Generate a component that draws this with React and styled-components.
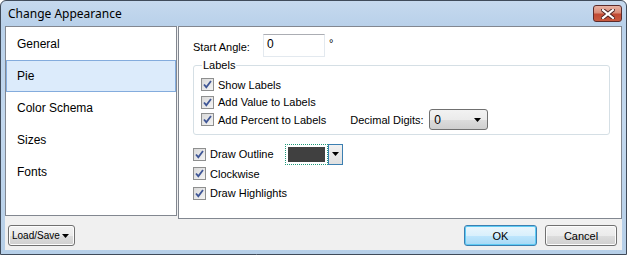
import React from 'react';
import styled, { createGlobalStyle } from 'styled-components';

const GlobalStyle = createGlobalStyle`
  html, body {
    margin: 0;
    padding: 0;
    background: #ffffff;
  }
  body {
    font-family: "Liberation Sans", Arial, sans-serif;
    font-size: 11px;
    color: #000;
  }
`;

const pages = ['General', 'Pie', 'Color Schema', 'Sizes', 'Fonts'];

const Check = () => (
  <svg width="11" height="11" viewBox="0 0 11 11">
    <path d="M2 5.5 L4.3 8.2 L9 2" fill="none" stroke="#3f5696" strokeWidth="1.8" />
  </svg>
);

const Arrow = () => (
  <svg width="7" height="4" viewBox="0 0 7 4">
    <path d="M0 0 H7 L3.5 4 Z" fill="#000" />
  </svg>
);

const CheckRow = ({ label, tall, children }) => (
  <Row tall={tall}>
    <Box>
      <Check />
    </Box>
    <span>{label}</span>
    {children}
  </Row>
);

const App = () => (
  <>
    <GlobalStyle />
    <Window>
      <TitleBar>
        <Title>Change Appearance</Title>
        <CloseButton>
          <svg width="14" height="10" viewBox="0 0 14 10">
            <path d="M2 1 L12 9 M12 1 L2 9" stroke="#4a2020" strokeWidth="4" strokeLinecap="square" />
            <path d="M2 1 L12 9 M12 1 L2 9" stroke="#ffffff" strokeWidth="2.2" strokeLinecap="square" />
          </svg>
        </CloseButton>
      </TitleBar>
      <Client>
        <Main>
          <Sidebar>
            {pages.map(p => (
              <Item key={p} selected={p === 'Pie'}>
                {p}
              </Item>
            ))}
          </Sidebar>
          <Panel>
            <AngleRow>
              <FieldLabel>Start Angle:</FieldLabel>
              <TextInput>0</TextInput>
              <Degree>°</Degree>
            </AngleRow>
            <Group>
              <Legend>Labels</Legend>
              <CheckRow label="Show Labels" />
              <CheckRow label="Add Value to Labels" />
              <CheckRow label="Add Percent to Labels">
                <DigitsLabel>Decimal Digits:</DigitsLabel>
                <Select>
                  <span>0</span>
                  <Arrow />
                </Select>
              </CheckRow>
            </Group>
            <Options>
              <CheckRow label="Draw Outline" tall>
                <ColorPicker>
                  <Swatch>
                    <SwatchFill />
                  </Swatch>
                  <SwatchArrow>
                    <Arrow />
                  </SwatchArrow>
                </ColorPicker>
              </CheckRow>
              <CheckRow label="Clockwise" tall />
              <CheckRow label="Draw Highlights" tall />
            </Options>
          </Panel>
        </Main>
        <Footer>
          <Button width={67} split>
            <span>Load/Save</span>
            <Arrow />
          </Button>
          <Spacer />
          <Button width={73} primary>
            OK
          </Button>
          <Button width={72}>Cancel</Button>
        </Footer>
      </Client>
    </Window>
  </>
);

export default App;

const Window = styled.div`
  width: 627px;
  height: 255px;
  box-sizing: border-box;
  border: 1px solid #404b5a;
  border-radius: 6px 6px 0 0;
  background: linear-gradient(#c6d9ee, #b9d1ea 24px, #c3d8ee 120px, #b6cfe8);
  padding: 0 4px 4px 4px;
  display: flex;
  flex-direction: column;
`;

const TitleBar = styled.div`
  height: 25px;
  display: flex;
  justify-content: space-between;
  align-items: flex-start;
  padding: 0 0 0 3px;
`;

const Title = styled.div`
  font-family: "Noto Sans", "Open Sans", sans-serif;
  font-size: 12px;
  line-height: 25px;
  color: #000;
`;

const CloseButton = styled.div`
  margin-top: 4px;
  width: 29px;
  height: 17px;
  box-sizing: border-box;
  border: 1px solid #5b2b2b;
  border-radius: 3px;
  background: linear-gradient(#e8b2a4, #d98c78 45%, #c14a34 55%, #c95b40);
  display: flex;
  align-items: center;
  justify-content: center;
`;

const Client = styled.div`
  flex: 1;
  background: #f0f0f0;
  display: flex;
  flex-direction: column;
`;

const Main = styled.div`
  height: 193px;
  display: flex;
  gap: 1px;
`;

const Sidebar = styled.div`
  width: 172px;
  height: 190px;
  box-sizing: border-box;
  background: #fff;
  border: 1px solid #828790;
  padding-top: 1px;
`;

const Item = styled.div`
  height: 32px;
  box-sizing: border-box;
  display: flex;
  align-items: center;
  padding-left: 10px;
  font-size: 12px;
  border: 1px solid ${p => (p.selected ? '#84acdd' : 'transparent')};
  background: ${p => (p.selected ? '#dcebfb' : 'transparent')};
`;

const Panel = styled.div`
  flex: 1;
  box-sizing: border-box;
  background: #fff;
  border: 1px solid #828790;
  padding: 7px 0 0 14px;
`;

const AngleRow = styled.div`
  display: flex;
  align-items: center;
  height: 23px;
`;

const FieldLabel = styled.span`
  width: 70px;
  padding-top: 3px;
`;

const TextInput = styled.div`
  width: 62px;
  height: 23px;
  box-sizing: border-box;
  border: 1px solid #e3e9ef;
  border-top-color: #abadb3;
  padding: 2px 3px;
  font-size: 12px;
`;

const Degree = styled.span`
  margin: -6px 0 0 4px;
`;

const Group = styled.fieldset`
  margin: 3px 11px 0 0;
  padding: 5px 0 5px 7px;
  border: 1px solid #d5dfe5;
  border-radius: 3px;
  min-width: 0;
`;

const Legend = styled.legend`
  padding: 0 1px;
  margin-left: 1px;
  line-height: 11px;
`;

const Row = styled.div`
  display: flex;
  align-items: center;
  height: ${p => (p.tall ? '19.5px' : '17.5px')};
`;

const Box = styled.span`
  width: 13px;
  height: 13px;
  box-sizing: border-box;
  border: 1px solid #8e8f8f;
  background: linear-gradient(135deg, #d9d9d9, #f4f4f4);
  display: flex;
  align-items: center;
  justify-content: center;
  margin-right: 4px;
`;

const DigitsLabel = styled.span`
  margin-left: 24px;
  width: 79px;
`;

const Select = styled.div`
  width: 59px;
  height: 21px;
  box-sizing: border-box;
  border: 1px solid #707070;
  border-radius: 3px;
  background: linear-gradient(#f2f2f2, #ebebeb 50%, #dddddd 51%, #cfcfcf);
  display: flex;
  align-items: center;
  justify-content: space-between;
  padding: 0 6px 0 4px;
  font-size: 12px;
`;

const Options = styled.div`
  margin-top: 10px;
`;

const ColorPicker = styled.div`
  display: flex;
  margin-left: 11px;
  height: 21px;
`;

const Swatch = styled.div`
  width: 43px;
  box-sizing: border-box;
  border: 1px dotted #1f9a7a;
  padding: 2px;
  display: flex;
`;

const SwatchFill = styled.div`
  flex: 1;
  background: #404040;
`;

const SwatchArrow = styled.div`
  width: 15px;
  box-sizing: border-box;
  border: 1px solid #3c7fb1;
  background: linear-gradient(#f1f1f1, #e0e0e0);
  display: flex;
  align-items: center;
  justify-content: center;
`;

const Footer = styled.div`
  flex: 1;
  display: flex;
  align-items: center;
  gap: 8px;
  padding: 2px 5px 0 3px;
`;

const Spacer = styled.div`
  flex: 1;
`;

const Button = styled.div`
  width: ${p => p.width}px;
  height: 21px;
  box-sizing: border-box;
  border: 1px solid ${p => (p.primary ? '#3c7fb1' : '#707070')};
  border-radius: 3px;
  background: ${p =>
    p.primary
      ? 'linear-gradient(#eaf6fd, #d9f0fc 50%, #bee6fd 51%, #a7d9f5)'
      : 'linear-gradient(#f2f2f2, #ebebeb 50%, #dddddd 51%, #cfcfcf)'};
  box-shadow: ${p => (p.primary ? 'inset 0 0 0 1px #5ecbf4' : 'inset 0 0 0 1px #fcfcfc')};
  display: flex;
  align-items: center;
  justify-content: ${p => (p.split ? 'space-between' : 'center')};
  padding: ${p => (p.split ? '0 5px 0 3px' : '0')};
  font-size: ${p => (p.split ? '10px' : '11px')};
`;
